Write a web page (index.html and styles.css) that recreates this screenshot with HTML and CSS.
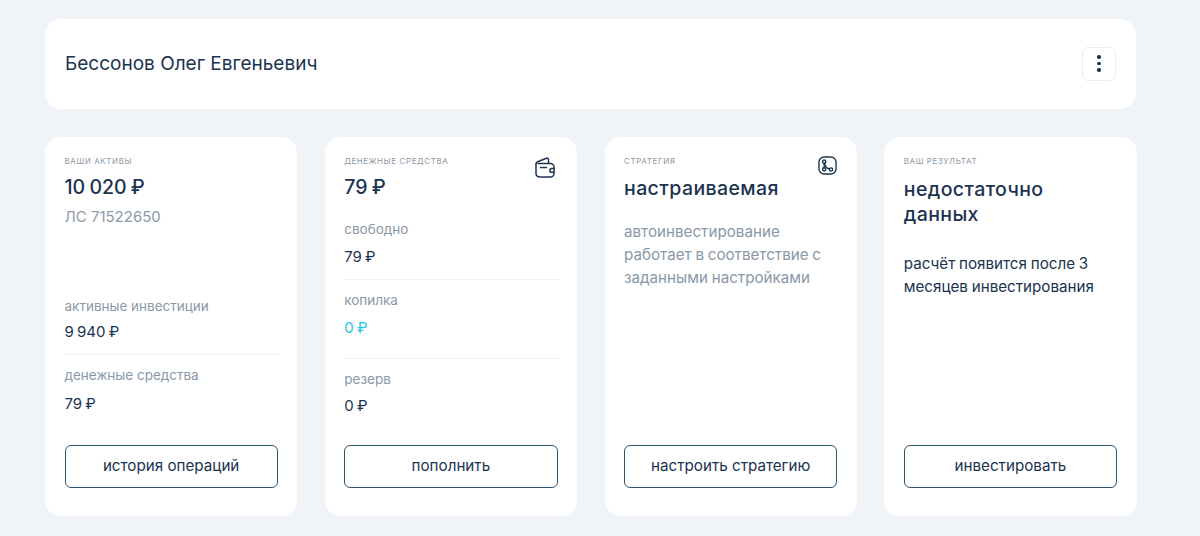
FILE: index.html
```html
<!DOCTYPE html>
<html lang="ru">
<head>
<meta charset="utf-8">
<title>Кабинет</title>
<link rel="stylesheet" href="styles.css">
</head>
<body>
<main class="page">
  <header class="head">
    <h1 class="name">Бессонов Олег Евгеньевич</h1>
    <button class="more" aria-label="меню"><span class="dot"></span><span class="dot"></span><span class="dot"></span></button>
  </header>
  <section class="cards">
    <article class="card">
      <div class="label">ваши активы</div>
      <div class="amount">10 020 ₽</div>
      <div class="account">ЛС 71522650</div>
      <div class="rows rows-assets">
        <div class="row"><div class="key">активные инвестиции</div><div class="val">9 940 ₽</div></div>
        <div class="row row-line"><div class="key">денежные средства</div><div class="val">79 ₽</div></div>
      </div>
      <button class="btn">история операций</button>
    </article>
    <article class="card">
      <svg class="icon icon-wallet" viewBox="0 0 20 21" fill="none" stroke="#1d3650" stroke-width="1.5" stroke-linecap="round" stroke-linejoin="round"><path d="M1 7 V16.5 a3.5 3.5 0 0 0 3.5 3.5 H15.5 a3.5 3.5 0 0 0 3.5-3.5 V10 a3.5 3.5 0 0 0-3.5-3.5 H3"/><path d="M1 7 a2.5 2.5 0 0 1 1.6-2.3 L11.5 1.2 a1.5 1.5 0 0 1 2 1.4 V6.5"/><path d="M5.5 10.5 H11.5"/><path d="M19 11.5 H16.8 a1.9 1.9 0 0 0 0 3.8 H19"/></svg>
      <div class="label">денежные средства</div>
      <div class="amount">79 ₽</div>
      <div class="rows rows-cash">
        <div class="row"><div class="key">свободно</div><div class="val">79 ₽</div></div>
        <div class="row row-line"><div class="key">копилка</div><div class="val val-accent">0 ₽</div></div>
        <div class="row row-line row-last"><div class="key">резерв</div><div class="val">0 ₽</div></div>
      </div>
      <button class="btn">пополнить</button>
    </article>
    <article class="card">
      <svg class="icon icon-branch" viewBox="0 0 20 20" fill="none" stroke="#1d3650" stroke-width="1.5" stroke-linecap="round" stroke-linejoin="round"><rect x="1" y="1" width="18" height="18" rx="5.5"/><circle cx="6.5" cy="6" r="1.7"/><circle cx="6.5" cy="14" r="1.7"/><circle cx="13.7" cy="14.2" r="1.7"/><path d="M6.5 7.7 V12.3"/><path d="M7 7.7 C7.6 10.4 9.5 13 12 13.7"/></svg>
      <div class="label">стратегия</div>
      <div class="title">настраиваемая</div>
      <p class="text text-muted">автоинвестирование работает в соответствие с заданными настройками</p>
      <button class="btn">настроить стратегию</button>
    </article>
    <article class="card">
      <div class="label">ваш результат</div>
      <div class="title title-wrap">недостаточно данных</div>
      <p class="text text-wide">расчёт появится после 3 месяцев инвестирования</p>
      <button class="btn">инвестировать</button>
    </article>
  </section>
</main>
</body>
</html>
```
FILE: styles.css
```css
* { box-sizing: border-box; }
html, body { margin: 0; height: 100%; }
body {
  background: #f0f4f9;
  color: #1b3350;
  font-family: Inter, "Liberation Sans", sans-serif;
  overflow: hidden;
}
.page { width: 1091.5px; margin-left: 45px; padding-top: 19px; }
.head {
  height: 90px;
  width: 1091px;
  background: #fff;
  border-radius: 16px;
  padding: 0 20px;
  display: flex;
  align-items: center;
  justify-content: space-between;
}
.name { margin: 0; font-size: 19px; font-weight: 400; line-height: 26px; }
.more {
  width: 34px; height: 34px;
  margin-top: -1px;
  background: #fff;
  border: 1.5px solid #e9ecf0;
  border-radius: 6px;
  padding: 0;
  display: flex; flex-direction: column; align-items: center; justify-content: center; gap: 3px;
}
.dot { width: 3.5px; height: 3.5px; border-radius: 50%; background: #1b3350; }
.cards {
  margin-top: 28px;
  display: grid;
  grid-template-columns: repeat(4, 1fr);
  column-gap: 27.5px;
  height: 379px;
}
.card {
  position: relative;
  background: #fff;
  border-radius: 16px;
  padding: 19px 19.5px 28px 19.5px;
  display: flex;
  flex-direction: column;
}
.icon { position: absolute; }
.icon-wallet { top: 20px; right: 22px; width: 20px; height: 21px; }
.icon-branch { top: 19px; right: 19.5px; width: 19px; height: 19px; }
.label {
  font-size: 8px; line-height: 10px; letter-spacing: 0.6px;
  text-transform: uppercase; color: #8b98a5;
}
.amount { margin-top: 7px; font-size: 19.5px; line-height: 28px; font-weight: 500; word-spacing: -1px; }
.account { margin-top: 5px; font-size: 15px; line-height: 22px; color: #8f9ba7; }
.title { margin-top: 10px; font-size: 19.5px; line-height: 25px; font-weight: 500; letter-spacing: 0.4px; }
.title-wrap { margin-top: 11px; }
.text { margin: 19px 0 0; font-size: 15.2px; line-height: 23px; word-spacing: -0.5px; }
.text-wide { margin-top: 25px; }
.text-muted { color: #8a98a8; }
.rows { margin-top: auto; margin-bottom: 30px; }
.rows-cash { margin-top: 18px; margin-bottom: auto; }
.row-line { border-top: 1px solid #eef0f3; margin-top: 11px; padding-top: 10px; }
.row-last { margin-top: 19px; }
.key { font-size: 13.5px; line-height: 20px; color: #8a98a8; }
.val { margin-top: 6.5px; font-size: 15px; line-height: 22px; word-spacing: -1px; }
.rows-assets .val { margin-top: 5.5px; }
.rows-assets .row-line .val { margin-top: 8px; }
.row-last .val { margin-top: 5.5px; }
.val-accent { margin-top: 7.5px; color: #1fc6dc; }
.btn {
  margin-top: auto;
  flex: none;
  height: 43px;
  width: 100%;
  padding: 0 0 2px;
  background: #fff;
  border: 1px solid #2f5470;
  border-radius: 6px;
  color: #1b3350;
  font: 400 15.2px/20px Inter, "Liberation Sans", sans-serif;
}
.rows + .btn { margin-top: 0; }
```
